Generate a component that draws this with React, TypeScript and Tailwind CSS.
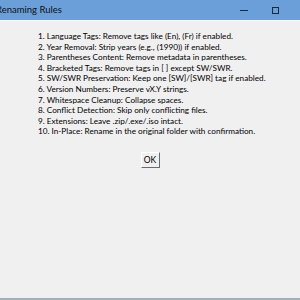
const rules = [
  "1. Language Tags: Remove tags like (En), (Fr) if enabled.",
  "2. Year Removal: Strip years (e.g., (1990)) if enabled.",
  "3. Parentheses Content: Remove metadata in parentheses.",
  "4. Bracketed Tags: Remove tags in [ ] except SW/SWR.",
  "5. SW/SWR Preservation: Keep one [SW]/[SWR] tag if enabled.",
  "6. Version Numbers: Preserve vX.Y strings.",
  "7. Whitespace Cleanup: Collapse spaces.",
  "8. Conflict Detection: Skip only conflicting files.",
  "9. Extensions: Leave .zip/.exe/.iso intact.",
  "10. In-Place: Rename in the original folder with confirmation.",
];

export default function App() {
  return (
    <div
      className="w-[300px] h-[300px] flex flex-col bg-[#f0f0f0] overflow-hidden"
      style={{ fontFamily: 'Lato, "Noto Sans", sans-serif' }}
    >
      {/* title bar */}
      <div className="h-[20px] shrink-0 bg-[#6a9fd9] flex items-center justify-between">
        <span className="ml-[-4px] text-[9.5px] text-[#111] whitespace-nowrap">Renaming Rules</span>
        <div className="flex items-center h-full">
          <div className="w-[8px] h-[1px] bg-[#1b2a3a] mr-[24px]"></div>
          <div className="w-[7px] h-[7px] border border-[#1b2a3a] mr-[21px]"></div>
        </div>
      </div>
      <div className="h-[1px] bg-white shrink-0"></div>

      {/* body */}
      <div className="flex-1 flex flex-col">
        <div className="pt-[10px] pl-[38px] text-[8.2px] leading-[10.6px] text-black">
          {rules.map((r) => (
            <div key={r} className="whitespace-nowrap">{r}</div>
          ))}
        </div>
        <div className="flex justify-center mt-[15px]">
          <button className="w-[19px] h-[16px] text-[8.5px] leading-none text-black bg-[#f0f0f0] border border-t-white border-l-white border-r-[#6b6b6b] border-b-[#6b6b6b] flex items-center justify-center">
            OK
          </button>
        </div>
        <div className="flex-1"></div>
        <div className="h-[3px] bg-[#f0eef2]"></div>
        <div className="h-[2px] bg-[#9fb3b7]"></div>
      </div>
    </div>
  );
}
